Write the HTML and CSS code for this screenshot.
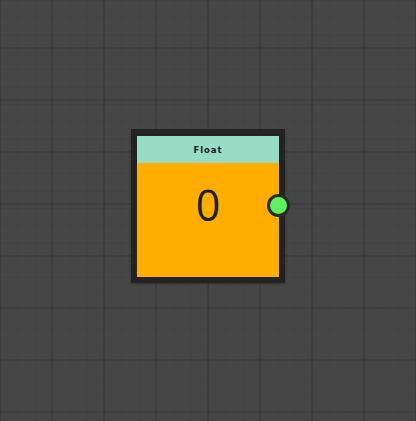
FILE: index.html
```html
<!DOCTYPE html>
<html>
<head>
<meta charset="utf-8">
<link rel="stylesheet" href="styles.css">
</head>
<body>
<div class="canvas">
  <div class="node">
    <div class="node-header">Float</div>
    <div class="node-body">
      <span class="value">0</span>
    </div>
    <div class="port"></div>
  </div>
</div>
</body>
</html>
```
FILE: styles.css
```css
html, body {
  margin: 0;
  padding: 0;
}
body {
  width: 416px;
  height: 421px;
  overflow: hidden;
  background: #464646;
}
.canvas {
  position: relative;
  width: 416px;
  height: 421px;
  background-color: #464646;
  background-image:
    linear-gradient(to right, rgba(0,0,0,0.10) 2px, transparent 2px),
    linear-gradient(to bottom, rgba(0,0,0,0.10) 2px, transparent 2px),
    linear-gradient(to right, rgba(0,0,0,0.04) 1px, transparent 1px),
    linear-gradient(to bottom, rgba(0,0,0,0.04) 1px, transparent 1px);
  background-size: 52px 52px, 52px 52px, 17.33px 17.33px, 17.33px 17.33px;
  background-position: 51px 47px, 51px 47px, 0 0, 0 0;
}
.node {
  position: absolute;
  left: 131px;
  top: 129px;
  width: 142px;
  border: 6px solid #232323;
  border-top-width: 7px;
  display: flex;
  flex-direction: column;
  box-shadow: 0 1px 2px rgba(0,0,0,0.3);
}
.node-header {
  height: 27px;
  background: #98dcc6;
  display: flex;
  align-items: center;
  justify-content: center;
  font-family: "DejaVu Sans", sans-serif;
  font-weight: bold;
  font-size: 8.5px;
  letter-spacing: 0.9px;
  color: #1a1a1a;
}
.node-body {
  height: 114px;
  background: #ffae00;
  display: flex;
  justify-content: center;
  align-items: flex-start;
}
.value {
  font-family: "Open Sans", sans-serif;
  font-size: 43px;
  line-height: 1;
  color: #1e1e1e;
  margin-top: 20px;
}
.port {
  position: absolute;
  right: -11px;
  top: 58px;
  width: 17px;
  height: 17px;
  border-radius: 50%;
  background: #5ff05f;
  border: 3px solid #2a2a2a;
}
```
